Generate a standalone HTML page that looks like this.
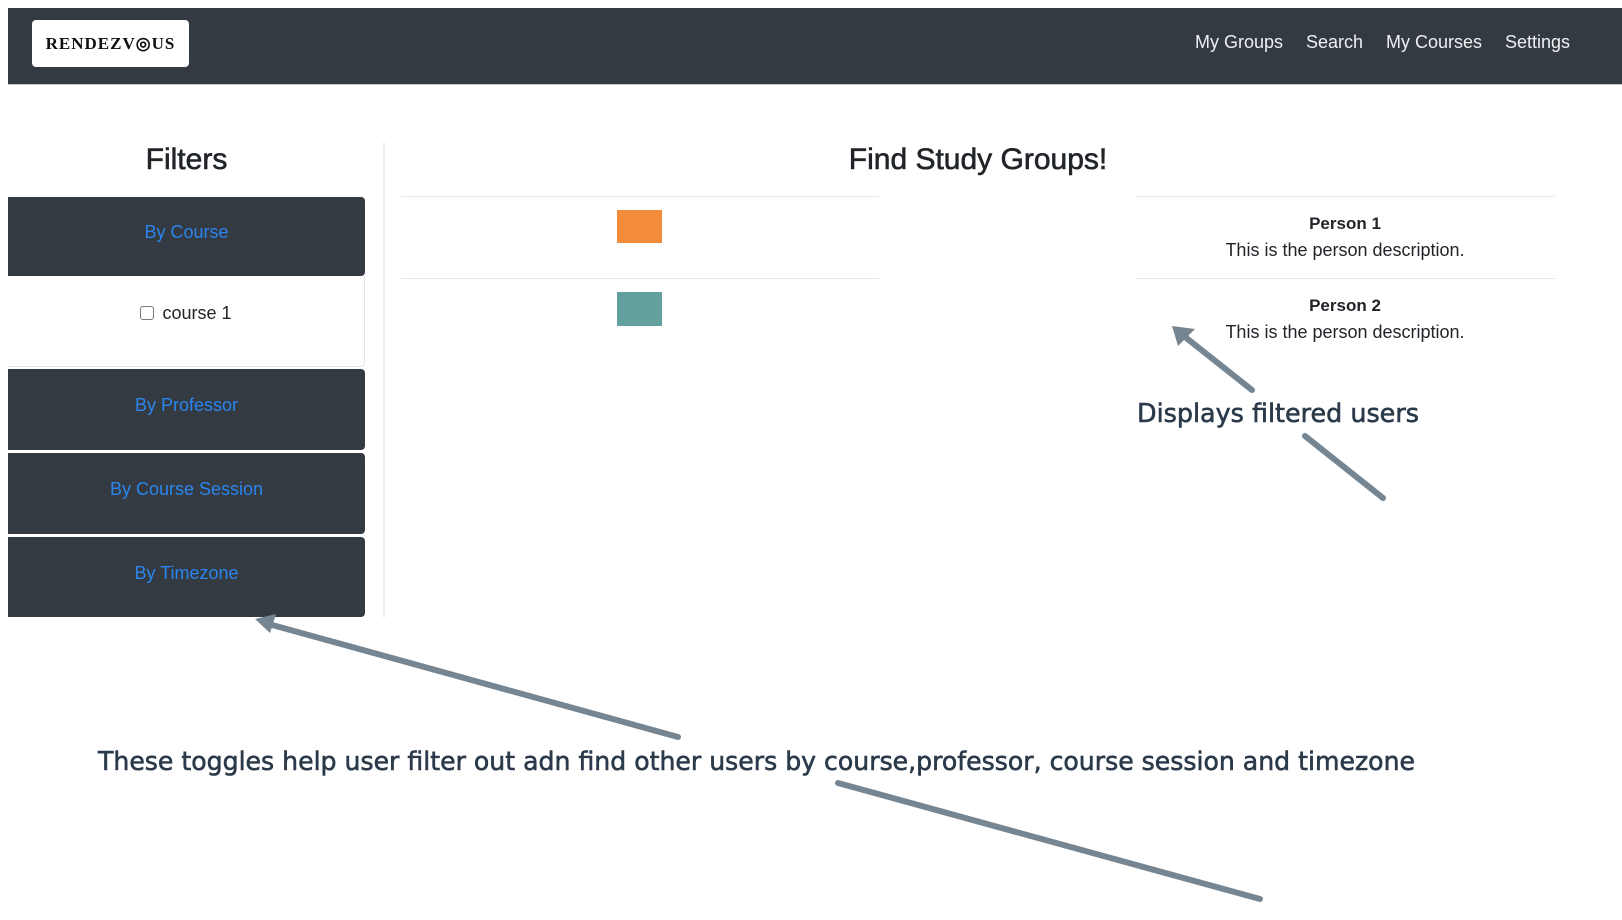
<!DOCTYPE html>
<html><head><style>
*{margin:0;padding:0;box-sizing:border-box}
body{width:1622px;height:920px;background:#fff;position:relative;overflow:hidden;font-family:"Liberation Sans",sans-serif}
.a{position:absolute}
.nav{left:8px;top:8px;width:1614px;height:77px;background:#343a42;border-bottom:1px solid #c8ccd2}
.logo{left:32px;top:20px;width:157px;height:47px;background:#fff;border-radius:4px;font-family:"Liberation Serif",serif;font-weight:bold;font-size:17px;letter-spacing:1px;color:#111;text-align:center;line-height:47px}
.nl{top:32px;color:#eef0f2;font-size:18px}
.btn{left:8px;width:357px;background:#343a42;border-radius:0 4px 4px 0;color:#2a86ee;font-size:18px;text-align:center}
.c{text-align:center;color:#212529;-webkit-text-stroke:0.6px #212529}
.hl{height:1px;background:#e6e7ea}
.p{width:420px;left:1135px;text-align:center;color:#212529;font-size:18px}
</style></head><body>
<div class="a nav"></div>
<div class="a logo">RENDEZV◎US</div>
<div class="a nl" style="left:1195px">My Groups</div>
<div class="a nl" style="left:1306px">Search</div>
<div class="a nl" style="left:1386px">My Courses</div>
<div class="a nl" style="left:1505px">Settings</div>

<div class="a c" style="left:8px;width:357px;top:143px;font-size:30px">Filters</div>
<div class="a btn" style="top:197px;height:79px;line-height:70px">By Course</div>
<div class="a" style="left:8px;top:276px;width:357px;height:91px;border-right:1px solid #e4e4e4;border-bottom:1px solid #e4e4e4;border-radius:0 0 4px 0;text-align:center;line-height:74px;font-size:18px;color:#212529"><span style="display:inline-block;width:14px;height:14px;border:1px solid #777;border-radius:3px;vertical-align:-1px;margin-right:8px"></span>course 1</div>
<div class="a btn" style="top:369px;height:81px;line-height:72px">By Professor</div>
<div class="a btn" style="top:453px;height:81px;line-height:72px">By Course Session</div>
<div class="a btn" style="top:537px;height:80px;line-height:72px">By Timezone</div>
<div class="a" style="left:383px;top:142px;width:2px;height:476px;background:#eeeff1"></div>

<div class="a c" style="left:700px;width:556px;top:143px;font-size:30px">Find Study Groups!</div>
<div class="a hl" style="left:401px;width:478px;top:196px"></div>
<div class="a hl" style="left:401px;width:478px;top:278px"></div>
<div class="a" style="left:617px;top:210px;width:45px;height:33px;background:#f28c3a"></div>
<div class="a" style="left:617px;top:292px;width:45px;height:34px;background:#62a09e"></div>
<div class="a hl" style="left:1135px;width:420px;top:196px"></div>
<div class="a hl" style="left:1135px;width:420px;top:278px"></div>
<div class="a p" style="top:214px;font-weight:bold;font-size:17px">Person 1</div>
<div class="a p" style="top:240px">This is the person description.</div>
<div class="a p" style="top:296px;font-weight:bold;font-size:17px">Person 2</div>
<div class="a p" style="top:322px">This is the person description.</div>

<svg class="a" style="left:0;top:0" width="1622" height="920">
<g stroke="#758592" stroke-width="6" stroke-linecap="round" fill="none">
<line x1="1252" y1="390" x2="1180" y2="333"/>
<line x1="1305" y1="436" x2="1383" y2="498"/>
<line x1="678" y1="737" x2="265" y2="623"/>
<line x1="838" y1="783" x2="1260" y2="899"/>
</g>
<g fill="#758592">
<polygon points="1172,326 1195,329 1178,346"/>
<polygon points="255,619 276,614 270,633"/>
</g>
<g fill="#2b3a4a" stroke="#2b3a4a" stroke-width="0.6" font-family="DejaVu Sans,Liberation Sans,sans-serif" font-size="26">
<text x="1137" y="422" textLength="282" lengthAdjust="spacingAndGlyphs">Displays filtered users</text>
<text x="98" y="770" textLength="1317" lengthAdjust="spacingAndGlyphs">These toggles help user filter out adn find other users by course,professor, course session and timezone</text>
</g>
</svg>
</body></html>
